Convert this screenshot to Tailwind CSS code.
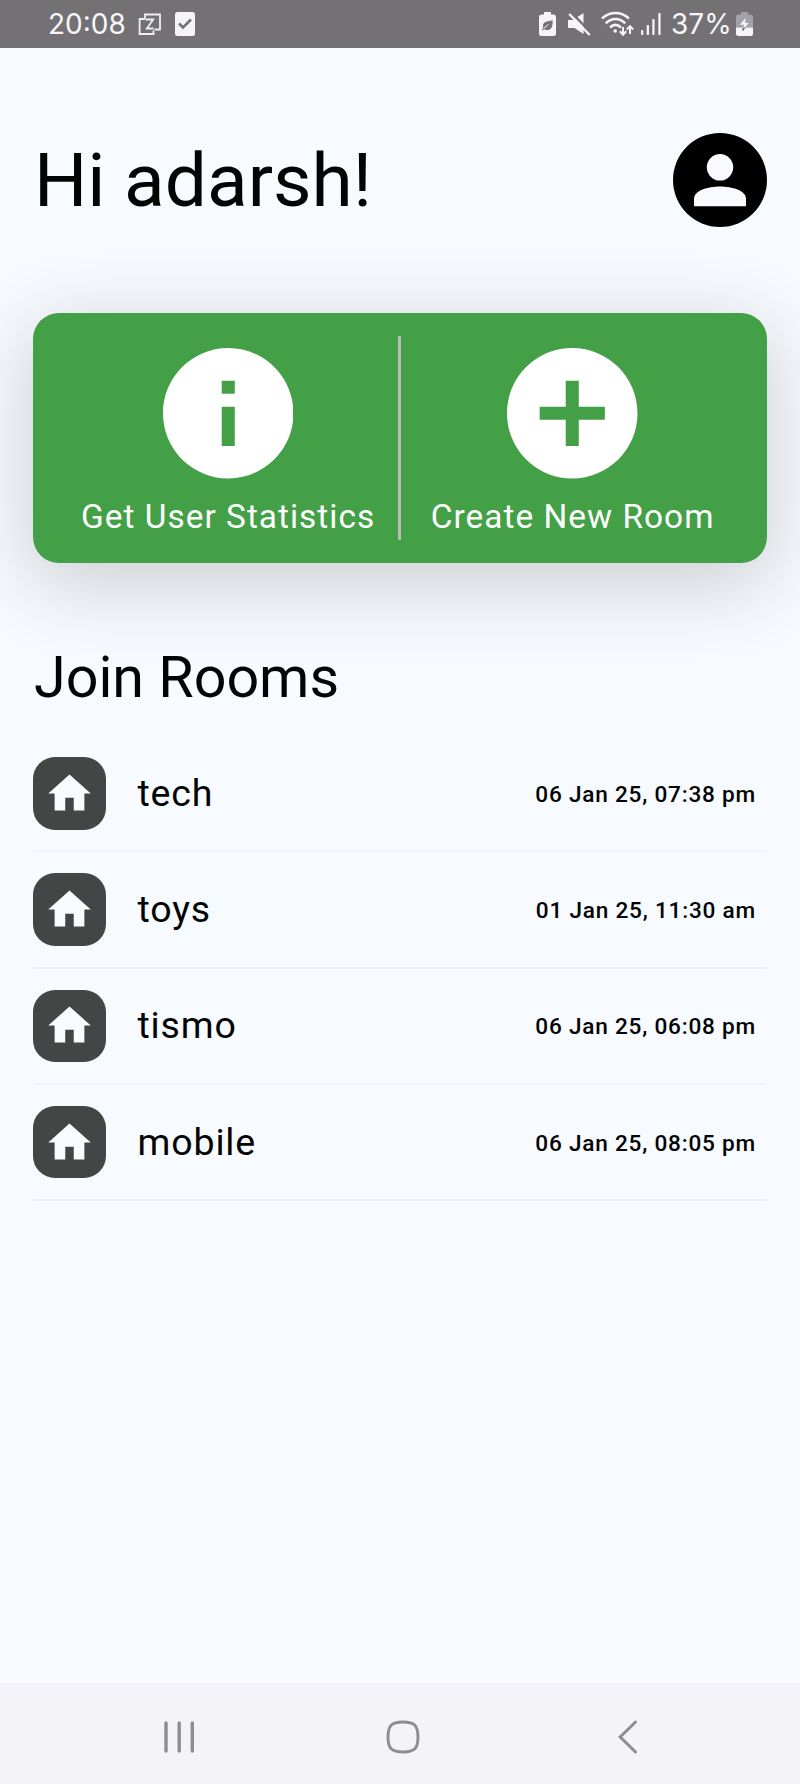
<!DOCTYPE html>
<html lang="en">
<head>
<meta charset="utf-8">
<title>Rooms</title>
<script src="https://cdn.jsdelivr.net/npm/@tailwindcss/browser@4"></script>
</head>
<body class="bg-[#f7fafe]">
<div class="flex flex-col w-[800px] h-[1784px] overflow-hidden bg-[#f7fafe] font-['Roboto',sans-serif] text-[#020303]">

  <!-- Status bar -->
  <header class="flex items-center h-12 shrink-0 bg-[#737174] pl-[48px] text-[#f6f6fb] font-['Inter',sans-serif] text-[28px] leading-[48px]">
    <span class="w-[78px] whitespace-nowrap">20:08</span>
    <svg class="ml-[12px]" width="24" height="24" viewBox="0 0 24 24" fill="none" stroke="#eef0f2" stroke-width="1.8">
      <path d="M7 6.5V2.5H22V17.5H16.5M7 7H1.6V22H15.500V18.500M7.500 7.500H15.200L8.800 16.500H15.500"/>
    </svg>
    <svg class="ml-[13px]" width="20" height="24" viewBox="0 0 20 24">
      <rect width="20" height="24" rx="2.500" fill="#f4f4fa"/>
      <path d="M4 11.500l4 4 8-8" fill="none" stroke="#737174" stroke-width="2.600"/>
    </svg>
    <svg class="ml-[344px]" width="17" height="24" viewBox="0 0 17 24">
      <path d="M5 0h7v2.500h2.500Q17 2.500 17 5v16.500Q17 24 14.500 24h-12Q0 24 0 21.500V5Q0 2.500 2.500 2.500H5z" fill="#f4f4fa"/>
      <path d="M13.700 8.500c0 7-1.500 9.500-5.700 9.500-1.200 0-2-.3-2.700-.8L3.500 18.300l-.8-1 1.500-1.300C3 11 6 9 13.700 8.500z" fill="#737174"/>
      <path d="M4.500 16.500l5-4" stroke="#f4f4fa" stroke-width="1"/>
    </svg>
    <svg class="ml-[12px]" width="23" height="24" viewBox="0 0 23 24">
      <path d="M0 8h5L15.500 1v21L6.500 16H0z" fill="#f4f4fa"/>
      <path d="M3.200.4l20.500 21" stroke="#737174" stroke-width="2.500"/>
      <path d="M1.200 2l20.500 21" stroke="#f4f4fa" stroke-width="2.400"/>
    </svg>
    <svg class="ml-[10px]" width="34" height="26" viewBox="0 0 34 26" fill="none" stroke="#f4f4fa" stroke-width="2.500">
      <path d="M1 7.500C9 0 20 0 28 7.500M4.700 12.300C10.500 6.500 18.500 6.500 24.300 12.300M9 16.500c3.500-3.400 7.500-3.400 11 0"/>
      <circle cx="14.200" cy="20" r="1.800" fill="#f4f4fa" stroke="none"/>
      <path d="M22 16v7.500M18.800 20.300l3.200 3.400 3.200-3.400M29 23v-7.500M25.800 18.500l3.200-3.400 3.200 3.400" stroke-width="2"/>
    </svg>
    <svg class="ml-[5px]" width="21" height="22" viewBox="0 0 21 22" fill="#f4f4fa">
      <rect x="1" y="17" width="2.300" height="5" rx=".8"/><rect x="6.700" y="12" width="2.300" height="10" rx=".8"/><rect x="12.300" y="6" width="2.300" height="16" rx=".8"/><rect x="18.300" y="0" width="2.300" height="22" rx=".8"/>
    </svg>
    <span class="ml-[10px] w-[61px] whitespace-nowrap">37%</span>
    <svg class="ml-[4px]" width="17" height="24" viewBox="0 0 17 24">
      <path d="M5 0h7v2.500h2.500Q17 2.500 17 5v10.500H0V5Q0 2.500 2.500 2.500H5z" fill="#a2a3a6"/>
      <path d="M0 15.500h17v6Q17 24 14.500 24h-12Q0 24 0 21.500z" fill="#f4f4fa"/>
      <path d="M9.500 6L4 12.800h4L6.500 18l6.300-7H9.200z" fill="#f4f4fa"/>
      <path d="M8.500 15.500l-2 3" stroke="#66676a" stroke-width="1.500"/>
    </svg>
  </header>

  <main class="flex flex-col grow pl-[33px] pr-[33.500px]">
    <section class="flex items-center justify-between mt-[85px] h-[94px]">
      <h1 class="pl-px pt-px text-[74.800px] leading-[94px] whitespace-nowrap">Hi adarsh!</h1>
      <svg width="94" height="94" viewBox="0 0 94 94">
        <circle cx="47" cy="47" r="47" fill="#000"/>
        <circle cx="47" cy="34.300" r="13.200" fill="#f8fafe"/>
        <path d="M21 73.300V66C21 57.500 35 53.600 47 53.600S73 57.500 73 66v7.300z" fill="#f8fafe"/>
      </svg>
    </section>

    <section class="flex relative mt-[85.500px] h-[250.500px] shrink-0 rounded-[26px] bg-[#44a047] text-[#fdfffd] shadow-[0_18px_80px_6px_rgba(0,0,0,0.17)]">
      <div class="flex flex-col items-center w-[365.500px] pl-[25px] pt-[35.500px]">
        <svg width="130.500" height="130.500" viewBox="2 2 20 20"><path fill="#fff" d="M12 2C6.480 2 2 6.480 2 12s4.480 10 10 10 10-4.480 10-10S17.520 2 12 2zm1 15h-2v-6h2v6zm0-8h-2V7h2v2z"/></svg>
        <span class="mt-[18.500px] text-[33.400px] leading-[40px] tracking-[1.020px] whitespace-nowrap">Get User Statistics</span>
      </div>
      <div class="w-[2.500px] h-[204.500px] mt-[23px] bg-[#b9bcb9]"></div>
      <div class="flex flex-col items-center w-[366px] pr-[22px] pt-[35.500px]">
        <svg width="130.500" height="130.500" viewBox="2 2 20 20"><path fill="#fff" d="M12 2C6.480 2 2 6.480 2 12s4.480 10 10 10 10-4.480 10-10S17.520 2 12 2zm5 11h-4v4h-2v-4H7v-2h4V7h2v4h4v2z"/></svg>
        <span class="mt-[18.500px] text-[33.400px] leading-[40px] tracking-[1.020px] whitespace-nowrap">Create New Room</span>
      </div>
    </section>

    <h2 class="relative pl-px mt-[85px] text-[57.400px] leading-[60px] whitespace-nowrap">Join Rooms</h2>

    <ul id="rooms" class="mt-[28.200px]"></ul>
  </main>

  <!-- System navigation -->
  <nav class="flex items-center h-[101px] shrink-0 bg-[#f4f3f8] pl-[163px] pt-[7px]">
    <svg width="32" height="34" viewBox="0 0 32 34" stroke="#8c8d8f" stroke-width="3.400" stroke-linecap="round"><path d="M3 3v28M16.200 3v28M29.300 3v28"/></svg>
    <svg class="ml-[191px]" width="34" height="34" viewBox="0 0 34 34" fill="none" stroke="#8c8d8f" stroke-width="2.900"><path d="M17 2C28.500 2 32 5.500 32 17S28.500 32 17 32 2 28.500 2 17 5.500 2 17 2z"/></svg>
    <svg class="ml-[198px]" width="20" height="34" viewBox="0 0 20 34" fill="none" stroke="#8c8d8f" stroke-width="3" stroke-linecap="round"><path d="M17.500 2L2.200 17l15.300 15"/></svg>
  </nav>
</div>
<script>
  const rooms = [
    ["tech", "06 Jan 25, 07:38 pm"],
    ["toys", "01 Jan 25, 11:30 am"],
    ["tismo", "06 Jan 25, 06:08 pm"],
    ["mobile", "06 Jan 25, 08:05 pm"],
  ];
  document.getElementById("rooms").innerHTML = rooms.map(([name, time]) => `
    <li class="flex items-center h-[116.300px] border-b-2 border-[#f2f2f6]">
      <span class="flex items-center justify-center w-[72.500px] h-[72.500px] rounded-[22px] bg-[#424644]">
        <svg width="51" height="51" viewBox="0 0 24 24"><path fill="#f9fcfe" d="M10 20v-6h4v6h5v-8h3L12 3 2 12h3v8z"/></svg>
      </span>
      <span class="ml-[32px] pb-px text-[37.500px] leading-[44px] tracking-[0.850px]">${name}</span>
      <time class="ml-auto pr-[10.500px] pt-[3px] text-[22.600px] leading-[30px] font-medium tracking-[0.780px] whitespace-nowrap">${time}</time>
    </li>`).join("");
</script>
</body>
</html>
